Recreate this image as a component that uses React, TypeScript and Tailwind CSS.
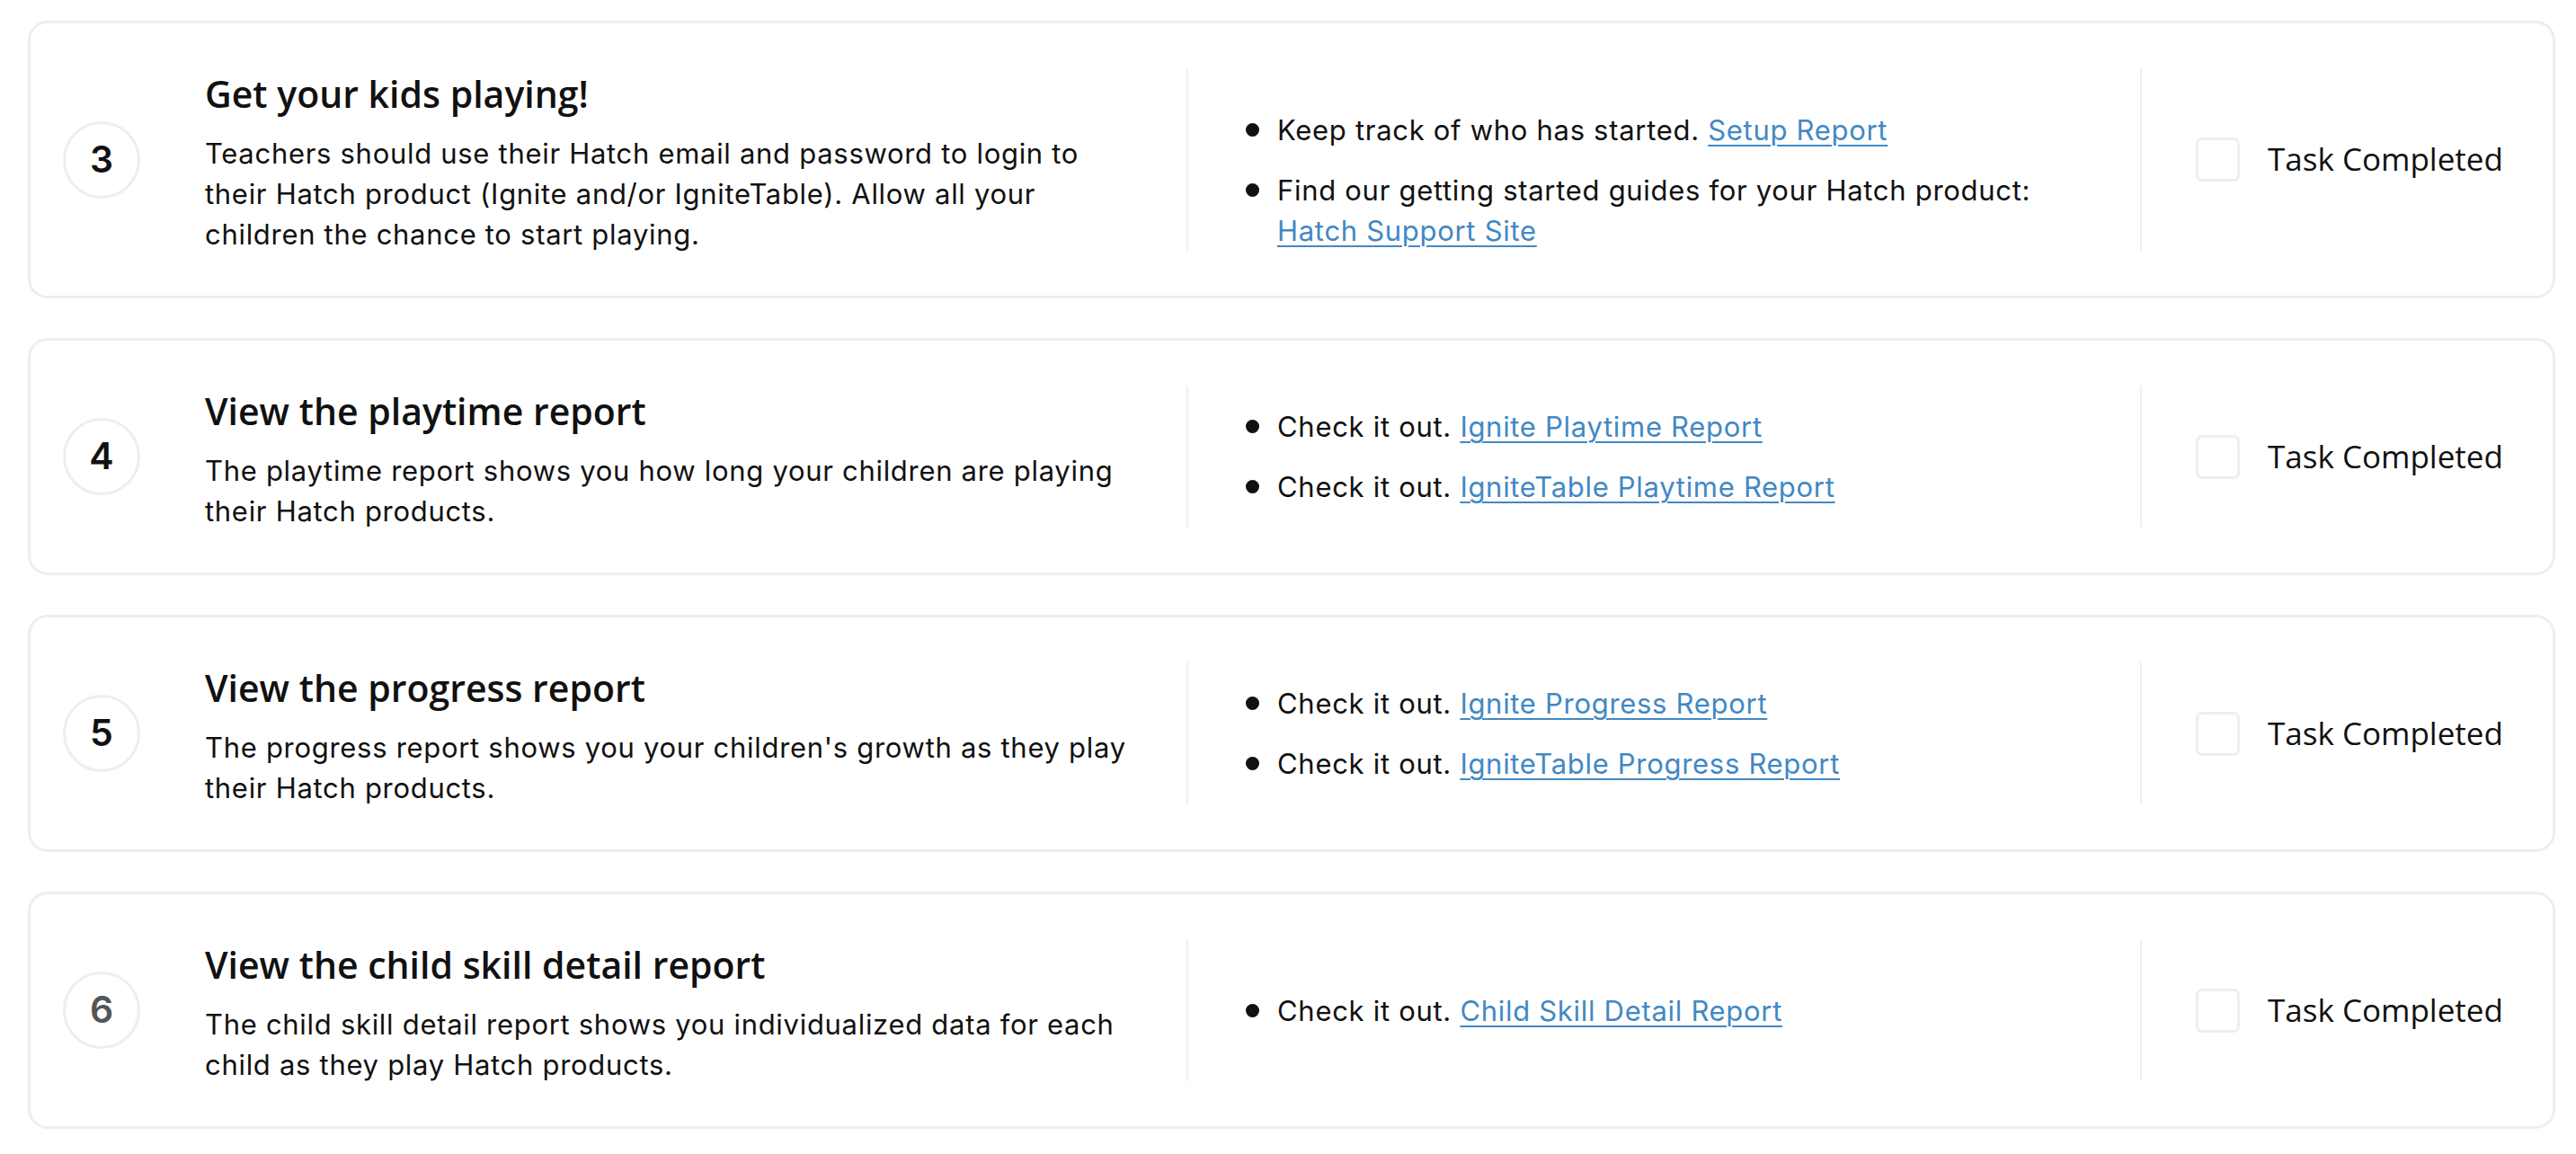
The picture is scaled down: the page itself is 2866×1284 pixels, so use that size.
import type { ReactNode } from "react";

type Step = {
  num: number;
  title: string;
  text: string;
  bullets: ReactNode[];
  dim?: boolean;
  listEnd?: boolean;
};

function Link({ children }: { children: ReactNode }) {
  return (
    <a
      href="#"
      className="whitespace-nowrap text-[#4288c4] underline underline-offset-[5px] decoration-[2px]"
    >
      {children}
    </a>
  );
}

const STEPS: Step[] = [
  {
    num: 3,
    title: "Get your kids playing!",
    text: "Teachers should use their Hatch email and password to login to their Hatch product (Ignite and/or IgniteTable). Allow all your children the chance to start playing.",
    bullets: [
      <>Keep track of who has started. <Link>Setup Report</Link></>,
      <>Find our getting started guides for your Hatch product: <Link>Hatch Support Site</Link></>,
    ],
    listEnd: true,
  },
  {
    num: 4,
    title: "View the playtime report",
    text: "The playtime report shows you how long your children are playing their Hatch products.",
    bullets: [
      <>Check it out. <Link>Ignite Playtime Report</Link></>,
      <>Check it out. <Link>IgniteTable Playtime Report</Link></>,
    ],
  },
  {
    num: 5,
    title: "View the progress report",
    text: "The progress report shows you your children's growth as they play their Hatch products.",
    bullets: [
      <>Check it out. <Link>Ignite Progress Report</Link></>,
      <>Check it out. <Link>IgniteTable Progress Report</Link></>,
    ],
  },
  {
    num: 6,
    title: "View the child skill detail report",
    text: "The child skill detail report shows you individualized data for each child as they play Hatch products.",
    bullets: [<>Check it out. <Link>Child Skill Detail Report</Link></>],
    dim: true,
  },
];

const bodyFont = "font-['Inter','Liberation_Sans',sans-serif] tracking-[0.7px]";
const headFont = "font-['Open_Sans','Liberation_Sans',sans-serif]";

function StepCard({ step }: { step: Step }) {
  return (
    <div className="flex rounded-[22px] border-[3px] border-[#eeeeee] bg-white py-[50px]">
      {/* number + description */}
      <div className="flex w-[1286px] shrink-0 items-center pl-[36px] pr-[65px]">
        <div
          className={`flex h-[86px] w-[86px] shrink-0 items-center justify-center rounded-full border-[3px] border-[#eeeeee] text-[41px] font-semibold font-['Inter','Liberation_Sans',sans-serif] ${
            step.dim ? "text-[#555555]" : "text-[#111111]"
          }`}
        >
          {step.num}
        </div>
        <div className="ml-[72px] translate-y-[4px]">
          <h2 className={`${headFont} mb-[20px] text-[41px] leading-[48px] font-semibold text-[#111111]`}>
            {step.title}
          </h2>
          <p className={`${bodyFont} text-[31px] leading-[45px] text-[#111111]`}>{step.text}</p>
        </div>
      </div>

      <div className="w-[2px] shrink-0 bg-[#efefef]" />

      {/* links */}
      <div
        className={`flex w-[1059px] shrink-0 flex-col pl-[64px] pr-[40px] ${
          step.listEnd ? "justify-end" : "justify-center"
        }`}
      >
        <ul className="flex flex-col gap-[22px]">
          {step.bullets.map((b, i) => (
            <li key={i} className={`${bodyFont} flex text-[31px] leading-[45px] text-[#111111]`}>
              <span className="mt-[15px] mr-[20px] h-[15px] w-[15px] shrink-0 rounded-full bg-[#111111]" />
              <span>{b}</span>
            </li>
          ))}
        </ul>
      </div>

      <div className="w-[2px] shrink-0 bg-[#efefef]" />

      {/* completion checkbox */}
      <div className="flex flex-1 items-center pl-[60px]">
        <span className="h-[49px] w-[49px] shrink-0 rounded-[7px] border-[3px] border-[#eeeeee] bg-white" />
        <span className={`${headFont} ml-[31px] text-[35px] text-[#111111]`}>Task Completed</span>
      </div>
    </div>
  );
}

export default function App() {
  return (
    <div className="min-h-screen bg-white pt-[23px] pl-[31px] pr-[23px] pb-[28px]">
      <div className="flex flex-col gap-[44px]">
        {STEPS.map((s) => (
          <StepCard key={s.num} step={s} />
        ))}
      </div>
    </div>
  );
}
